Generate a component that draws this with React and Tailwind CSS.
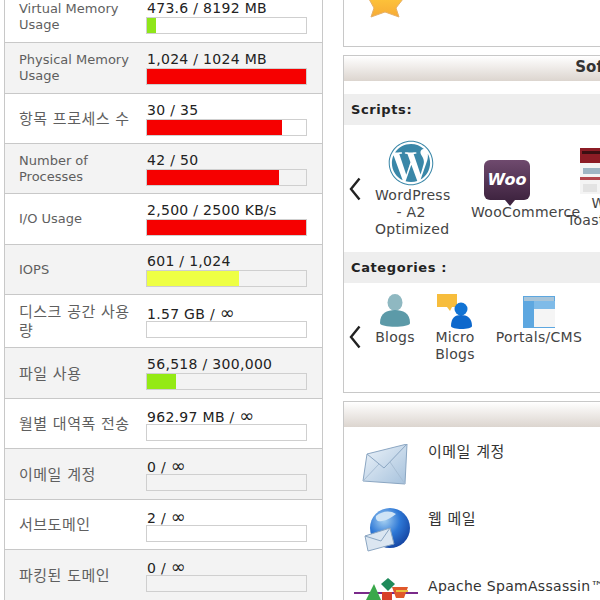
import React from "react";
import { FaWordpress } from "react-icons/fa";

const font = { fontFamily: '"DejaVu Sans", "Noto Sans CJK KR", sans-serif' };

const rows = [
  { label: "Virtual Memory Usage", value: "473.6 / 8192 MB", fill: "w-[5.5%] bg-[#8fe619]", h: "h-[51px]", alt: false },
  { label: "Physical Memory Usage", value: "1,024 / 1024 MB", fill: "w-full bg-[#f60000]", h: "h-[51px]", alt: true },
  { label: "항목 프로세스 수", value: "30 / 35", fill: "w-[85%] bg-[#f60000]", h: "h-[50px]", alt: false, ko: true },
  { label: "Number of Processes", value: "42 / 50", fill: "w-[83%] bg-[#f60000]", h: "h-[50px]", alt: true },
  { label: "I/O Usage", value: "2,500 / 2500 KB/s", fill: "w-full bg-[#f60000]", h: "h-[51px]", alt: false },
  { label: "IOPS", value: "601 / 1,024", fill: "w-[58%] bg-[#eeff44]", h: "h-[50px]", alt: true },
  { label: "디스크 공간 사용량", value: "1.57 GB / ", inf: true, fill: "w-0", h: "h-[53px]", alt: false, ko: true },
  { label: "파일 사용", value: "56,518 / 300,000", fill: "w-[18.5%] bg-[#94ea14]", h: "h-[51px]", alt: true, ko: true },
  { label: "월별 대역폭 전송", value: "962.97 MB / ", inf: true, fill: "w-0", h: "h-[50px]", alt: false, ko: true },
  { label: "이메일 계정", value: "0 / ", inf: true, fill: "w-0", h: "h-[51px]", alt: true, ko: true },
  { label: "서브도메인", value: "2 / ", inf: true, fill: "w-0", h: "h-[50px]", alt: false, ko: true },
  { label: "파킹된 도메인", value: "0 / ", inf: true, fill: "w-0", h: "h-[51px]", alt: true, ko: true },
];

function Row({ r }) {
  return (
    <div className={`flex items-center border-b border-[#c8c8c8] pl-[14px] ${r.h} ${r.alt ? "bg-[#f3f3f3]" : "bg-white"}`}>
      <div
        className={`w-[127px] shrink-0 pr-[10px] text-[#5f5f5f] ${
          r.ko ? "pt-[2px] text-[15px] leading-[19px] tracking-[0.5px]" : "text-[13px] leading-[16px]"
        }`}
      >
        {r.label}
      </div>
      <div className="w-[161px] shrink-0">
        <div className="h-[17px] whitespace-nowrap pl-[1px] text-[14px] leading-[17px] tracking-[0.3px] text-[#222]">
          {r.value}
          {r.inf && <span className="text-[18px] leading-none">∞</span>}
        </div>
        <div className="h-[17px] border border-[#cfcfcf]">
          <div className={`h-full ${r.fill}`} />
        </div>
      </div>
    </div>
  );
}

function Chevron() {
  return (
    <svg width="14" height="24" viewBox="0 0 14 24" className="shrink-0">
      <path d="M11.5 1.5 L3 12 L11.5 22.5" fill="none" stroke="#222" strokeWidth="2.4" />
    </svg>
  );
}

function Star() {
  return (
    <svg width="36" height="18" viewBox="0 20 36 18" className="ml-[24px]">
      <defs>
        <linearGradient id="starFill" x1="0" y1="0" x2="0" y2="1">
          <stop offset="0" stopColor="#fdc23a" />
          <stop offset="1" stopColor="#f7ab35" />
        </linearGradient>
      </defs>
      <path d="M1 19 L35 19 L28 28 L31 37 L17 32 L3 37 L6 28 Z" fill="url(#starFill)" stroke="#e6b06a" strokeWidth="1" />
    </svg>
  );
}

function WooIcon() {
  return (
    <div className="relative flex h-[40px] w-[46px] items-center justify-center rounded-[6px] bg-gradient-to-b from-[#6f4a6e] to-[#3f2440]">
      <span className="text-[16px] font-bold italic leading-none text-white">Woo</span>
      <div className="absolute left-[21px] top-[40px] h-0 w-0 border-x-[5px] border-t-[6px] border-x-transparent border-t-[#3f2440]" />
    </div>
  );
}

function Thumb() {
  return (
    <svg width="46" height="46" viewBox="0 0 46 46">
      <rect width="46" height="46" fill="#f4f4f4" />
      <rect width="46" height="15" fill="#8c1c25" />
      <rect x="2" y="3" width="42" height="3" fill="#3a0f12" />
      <rect x="3" y="20" width="18" height="6" fill="#9fb6c4" />
      <rect x="22" y="22" width="20" height="2" fill="#d0d0d0" />
      <rect x="0" y="29" width="46" height="3" fill="#b3474d" />
      <rect x="3" y="36" width="14" height="8" fill="#e3e3e3" />
    </svg>
  );
}

function Person() {
  return (
    <svg width="36" height="36" viewBox="0 0 36 36">
      <ellipse cx="18" cy="9.5" rx="7.5" ry="8.5" fill="#8fb8c1" />
      <path d="M3 30 C3 20 10 17 18 17 C26 17 33 20 33 30 C33 35 3 35 3 30 Z" fill="#5c9aa8" />
    </svg>
  );
}

function MicroIcon() {
  return (
    <svg width="38" height="36" viewBox="0 0 38 36">
      <path d="M1 1 H21 V14 H16 L14 18 L11 14 H1 Z" fill="#f7bd3c" />
      <circle cx="25" cy="16" r="6.5" fill="#1173d4" />
      <path d="M15 33 C15 25 19 22 25 22 C31 22 36 25 36 33 C36 37 15 37 15 33 Z" fill="#0d68cc" />
    </svg>
  );
}

function PortalIcon() {
  return (
    <svg width="32" height="32" viewBox="0 0 32 32" className="mt-[3px]">
      <rect width="32" height="32" fill="#5da7e0" />
      <rect x="1" y="1" width="30" height="4" fill="#a9c5d9" />
      <rect x="11" y="5" width="21" height="8" fill="#7fbbe8" />
      <rect x="11" y="13" width="21" height="18" fill="#f5f5f5" />
    </svg>
  );
}

function Envelope() {
  return (
    <svg width="48" height="44" viewBox="0 0 48 44">
      <defs>
        <linearGradient id="envFill" x1="0" y1="0" x2="1" y2="1">
          <stop offset="0" stopColor="#eef4fa" />
          <stop offset="1" stopColor="#a5c1dc" />
        </linearGradient>
      </defs>
      <path d="M5 10 L45 0 L43 40 L1 37 Z" fill="url(#envFill)" stroke="#8ba6c2" />
      <path d="M5 10 L22 24 L45 0" fill="none" stroke="#8ba6c2" />
      <path d="M1 37 L17 20 M43 40 L28 18" fill="none" stroke="#a8bed4" />
    </svg>
  );
}

function Webmail() {
  return (
    <svg width="48" height="46" viewBox="0 0 48 46" className="-mt-[5px]">
      <defs>
        <radialGradient id="globeFill" cx="0.35" cy="0.3" r="0.8">
          <stop offset="0" stopColor="#a8d2f2" />
          <stop offset="0.5" stopColor="#2e78d6" />
          <stop offset="1" stopColor="#123f9c" />
        </radialGradient>
      </defs>
      <circle cx="28" cy="22" r="20" fill="url(#globeFill)" />
      <path d="M14 10 C20 5 28 4 34 8 C30 11 26 14 20 15 C16 16 13 14 14 10 Z" fill="#cfe4f6" />
      <path d="M3 30 L28 22 L32 38 L6 45 Z" fill="#dbe6f1" stroke="#8ba6c2" />
      <path d="M3 30 L19 35 L28 22" fill="none" stroke="#8ba6c2" />
    </svg>
  );
}

function Spam() {
  return (
    <svg width="64" height="22" viewBox="0 0 64 22" className="ml-[-8px]">
      <path d="M0 15 H64" stroke="#7a2a8a" strokeWidth="2" />
      <path d="M12 22 L20 6 L27 22 Z" fill="#3aa84a" />
      <path d="M27 6 L34 0 L41 6 L34 13 Z" fill="#1f8a5a" />
      <path d="M38 9 H54 L50 20 H42 Z" fill="#e0582a" />
      <path d="M42 13 H54" stroke="#e9c13c" strokeWidth="2" />
      <path d="M28 14 H38 V22 H28 Z" fill="#d8402a" />
    </svg>
  );
}

function Item({ icon, label }) {
  return (
    <div className="flex w-[72px] shrink-0 flex-col items-center">
      <div className="flex h-[46px] items-center justify-center">{icon}</div>
      <div className="mt-[1px] w-full text-center text-[14px] leading-[17px] tracking-[0.3px] text-[#444]">{label}</div>
    </div>
  );
}

function Cat({ icon, label, w }) {
  return (
    <div className={`flex shrink-0 flex-col items-center ${w}`}>
      <div className="flex h-[36px] w-[38px] justify-center">{icon}</div>
      <div className="text-center text-[14px] leading-[17px] tracking-[0.3px] text-[#444]">{label}</div>
    </div>
  );
}

function Band({ children }) {
  return <div className="flex h-[31px] items-center bg-[#eeeeee] pl-[7px] pt-[1px] text-[13px] font-bold tracking-[0.6px] text-[#222]">{children}</div>;
}

function Header({ children }) {
  return (
    <div className="flex h-[25px] items-center justify-center bg-gradient-to-b from-white to-[#dcd5cf] pb-[2px] pl-[2px] text-[15px] font-bold text-[#333]">
      {children}
    </div>
  );
}

function Feature({ icon, label, h, ko }) {
  return (
    <div className={`flex ${h}`}>
      <div className="w-[66px] shrink-0 pl-[18px]">{icon}</div>
      <div className={`pl-[18px] leading-[17px] text-[#333] ${ko ? "text-[15px] tracking-[0.5px]" : "text-[14px] tracking-[0.3px]"}`}>{label}</div>
    </div>
  );
}

export default function App() {
  return (
    <div className="flex h-[600px] w-[600px] gap-5 overflow-hidden bg-white pl-1" style={font}>
      <div className="-mt-2 w-[319px] shrink-0 border-x border-[#c8c8c8]">
        {rows.map((r) => (
          <Row key={r.label} r={r} />
        ))}
      </div>
      <div className="w-[538px] shrink-0">
        <div className="flex h-[47px] items-start border-b border-l border-[#c8c8c8]">
          <Star />
        </div>
        <div className="mt-2 h-[338px] border-b border-l border-t border-[#c8c8c8]">
          <Header>Software</Header>
          <div className="mt-[13px]">
            <Band>Scripts:</Band>
          </div>
          <div className="flex h-[127px] items-center gap-[13px] pl-[4px]">
            <Chevron />
            <div className="flex items-center gap-6">
              <Item icon={<FaWordpress className="h-[46px] w-[46px] text-[#3a87a8]" />} label="WordPress - A2 Optimized" />
              <Item icon={<WooIcon />} label="WooCommerce" />
              <Item icon={<Thumb />} label="WP Toastmasters" />
            </div>
          </div>
          <Band>Categories :</Band>
          <div className="flex h-[108px] items-center gap-[13px] pl-[4px]">
            <Chevron />
            <div className="flex items-start gap-5 self-start pt-[10px]">
              <Cat icon={<Person />} label="Blogs" w="w-[40px]" />
              <Cat icon={<MicroIcon />} label="Micro Blogs" w="w-[40px]" />
              <Cat icon={<PortalIcon />} label="Portals/CMS" w="w-[88px]" />
            </div>
          </div>
        </div>
        <div className="mt-2 h-[260px] border-l border-t border-[#c8c8c8]">
          <Header>&nbsp;</Header>
          <div className="pt-[17px]">
            <Feature icon={<Envelope />} label="이메일 계정" h="h-[67px]" ko />
            <Feature icon={<Webmail />} label="웹 메일" h="h-[67px]" ko />
            <Feature icon={<Spam />} label="Apache SpamAssassin™" h="h-[40px]" />
          </div>
        </div>
      </div>
    </div>
  );
}
